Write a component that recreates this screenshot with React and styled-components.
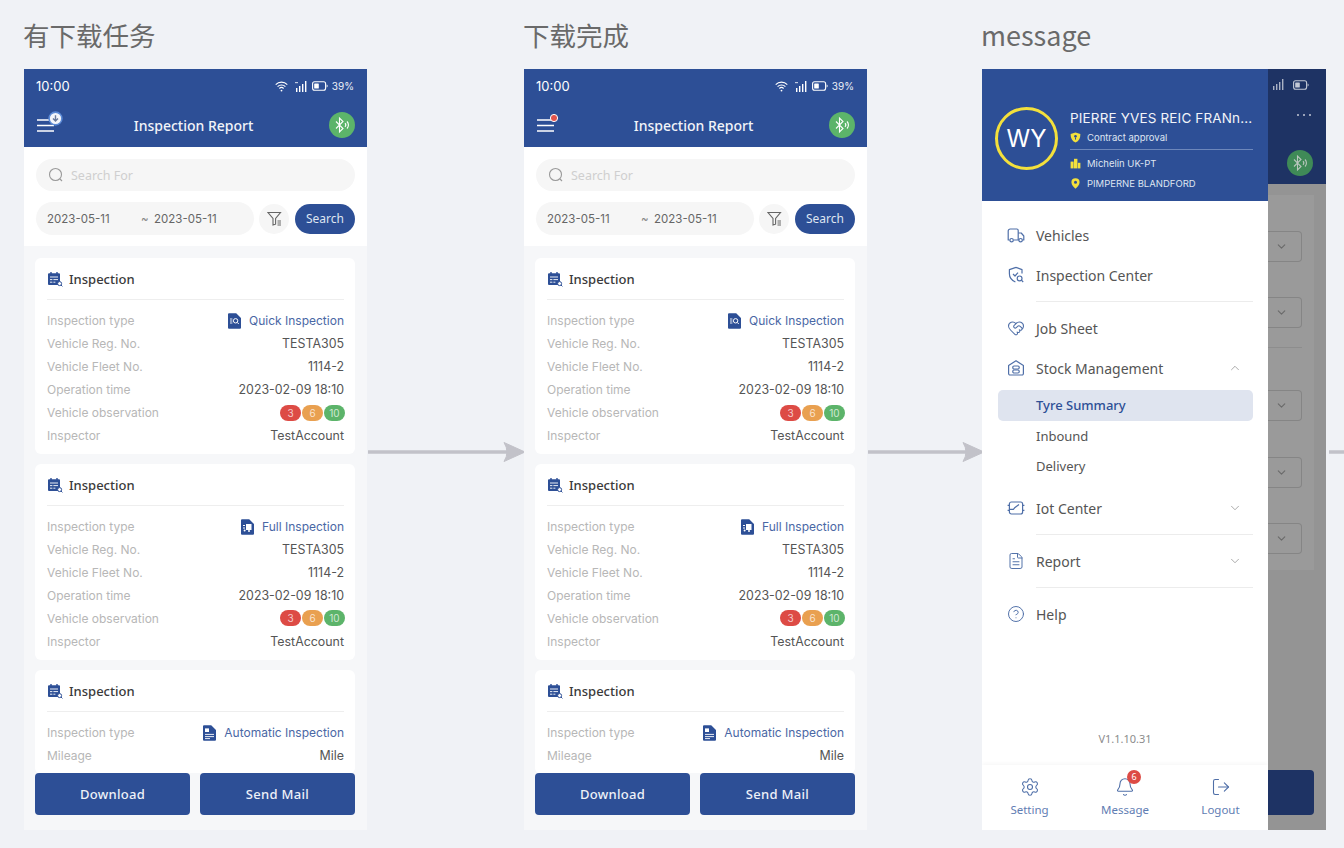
import React from 'react';
import styled, { createGlobalStyle } from 'styled-components';
import { ChevronDown, ChevronUp, HeartHandshake, FileText, CircleHelp, Settings, Bell, LogOut } from 'lucide-react';

const BLUE = '#2d4f96';
const ICON = '#4f6fa8';

const Global = createGlobalStyle`
  html, body { margin: 0; padding: 0; background: #f0f2f6; }
  body { font-family: "Noto Sans", "Noto Sans CJK SC", sans-serif; }
  * { box-sizing: border-box; }
`;

const Page = styled.div`
  width: 1344px;
  height: 848px;
  overflow: hidden;
  display: flex;
  padding-left: 24px;
  background: #f0f2f6;
`;

const Column = styled.section`
  flex: none;
  display: flex;
  flex-direction: column;
`;

const Title = styled.h2`
  height: 69px;
  margin: 0 0 0 -1px;
  padding-top: 16px;
  font-size: ${(p) => p.$size}px;
  line-height: 38px;
  font-weight: 400;
  color: #6a6a6a;
  font-family: "Noto Sans CJK SC", "Noto Sans", sans-serif;
`;

const ArrowCell = styled.div`
  flex: none;
  width: ${(p) => p.$width}px;
  padding: 440px 0 0 ${(p) => p.$inset || 0}px;
  svg { display: block; overflow: visible; }
`;

const Phone = styled.div`
  position: relative;
  width: ${(p) => p.$width || 343}px;
  height: 761px;
  overflow: hidden;
  display: flex;
  flex-direction: ${(p) => (p.$row ? 'row' : 'column')};
  background: #f6f7f9;
`;

const TopBar = styled.header`
  flex: none;
  height: 78px;
  background: ${BLUE};
  color: #fff;
`;

const StatusBar = styled.div`
  height: 34px;
  padding: 0 13px 0 12px;
  display: flex;
  align-items: center;
  justify-content: space-between;
`;

const Time = styled.span`
  font-family: Inter, sans-serif;
  font-size: 13px;
  color: #fff;
`;

const StatusIcons = styled.div`
  display: flex;
  align-items: center;
  gap: 4px;
  svg { display: block; }
  svg:first-child { margin-right: 3px; }
`;

const Percent = styled.span`
  font-family: Inter, sans-serif;
  font-size: 10px;
  color: #eef1f8;
`;

const NavBar = styled.div`
  height: 44px;
  padding: 0 12px 0 13px;
  display: flex;
  align-items: center;
  justify-content: space-between;
`;

const NavTitle = styled.div`
  font-size: 14px;
  font-weight: 500;
  color: #f2f4f9;
`;

const BtButton = styled.div`
  width: 26px;
  height: 26px;
  flex: none;
  border-radius: 50%;
  background: ${(p) => (p.$dim ? '#3f8a57' : '#5cb46a')};
  display: flex;
  align-items: center;
  justify-content: center;
`;

const SearchPanel = styled.div`
  flex: none;
  height: 99px;
  padding: 12px 12px 0 12px;
  background: #fff;
`;

const SearchInput = styled.div`
  height: 32px;
  border-radius: 16px;
  background: #f6f6f6;
  padding-left: 12px;
  display: flex;
  align-items: center;
  gap: 7px;
  font-size: 12.5px;
  color: #cfcfcf;
`;

const FilterRow = styled.div`
  margin-top: 11px;
  display: flex;
  align-items: center;
`;

const DateRange = styled.div`
  width: 218px;
  height: 33px;
  border-radius: 17px;
  background: #f6f6f6;
  padding-left: 11px;
  display: flex;
  align-items: center;
  font-family: Inter, sans-serif;
  font-size: 11.5px;
  color: #666;
`;

const DateValue = styled.span`
  flex: none;
  width: 64px;
`;

const Tilde = styled.span`
  flex: none;
  width: 13px;
  margin-left: 30px;
  color: #888;
`;

const FilterButton = styled.div`
  width: 30px;
  height: 30px;
  margin-left: 5px;
  border-radius: 50%;
  background: #f6f6f6;
  display: flex;
  align-items: center;
  justify-content: center;
`;

const SearchButton = styled.div`
  width: 60px;
  height: 30px;
  margin-left: 6px;
  border-radius: 15px;
  background: ${BLUE};
  color: #dfe5f1;
  font-size: 12px;
  display: flex;
  align-items: center;
  justify-content: center;
`;

const List = styled.div`
  flex: 1;
  min-height: 0;
  overflow: hidden;
  padding: 12px 12px 0 11px;
  display: flex;
  flex-direction: column;
  gap: 10px;
`;

const Card = styled.article`
  flex: none;
  background: #fff;
  border-radius: 6px;
  padding: 0 11px 7px 12px;
`;

const CardHead = styled.div`
  height: 42px;
  padding-top: 1px;
  display: flex;
  align-items: center;
  gap: 6px;
  border-bottom: 1px solid #eeeeee;
  font-size: 13px;
  font-weight: 500;
  color: #3a3a3a;
  svg { display: block; }
`;

const Rows = styled.div`
  padding-top: 9.5px;
`;

const Row = styled.div`
  height: 22.9px;
  display: flex;
  align-items: center;
  justify-content: space-between;
  font-family: Inter, sans-serif;
  font-size: 12px;
`;

const Label = styled.span`
  color: #b7b7b7;
`;

const Value = styled.span`
  color: ${(p) => (p.$link ? '#4a67a5' : '#555')};
  font-size: ${(p) => (p.$link ? 12 : 12.4)}px;
  display: flex;
  align-items: center;
  gap: 7px;
  svg { display: block; }
`;

const Badges = styled.div`
  display: flex;
  gap: 1px;
  margin-right: -1px;
`;

const Badge = styled.span`
  width: 21px;
  height: 16px;
  border-radius: 8px;
  background: ${(p) => p.$color};
  color: rgba(255, 255, 255, 0.72);
  font-size: 10px;
  line-height: 16px;
  text-align: center;
`;

const Footer = styled.div`
  position: absolute;
  left: 11px;
  right: 12px;
  bottom: 15px;
  height: 42px;
  display: flex;
  justify-content: space-between;
  background: #f6f7f9;
`;

const ActionButton = styled.div`
  width: 155px;
  border-radius: 4px;
  background: ${BLUE};
  color: #eef1f8;
  font-size: 13px;
  font-weight: 500;
  letter-spacing: 0.3px;
  display: flex;
  align-items: center;
  justify-content: center;
`;

/* message screen */
const Drawer = styled.aside`
  flex: none;
  width: 286px;
  display: flex;
  flex-direction: column;
  background: #fff;
`;

const Profile = styled.div`
  flex: none;
  height: 132px;
  padding: 38px 15px 0 13px;
  background: ${BLUE};
  display: flex;
  align-items: flex-start;
  gap: 12px;
`;

const Avatar = styled.div`
  flex: none;
  width: 63px;
  height: 63px;
  border: 3px solid #f3e03c;
  border-radius: 50%;
  color: #fff;
  font-family: Inter, sans-serif;
  font-size: 24px;
  display: flex;
  align-items: center;
  justify-content: center;
`;

const ProfileInfo = styled.div`
  flex: 1;
  min-width: 0;
  margin-top: 2px;
  font-family: Inter, sans-serif;
`;

const ProfileName = styled.div`
  font-size: 13.5px;
  letter-spacing: 0.15px;
  line-height: 18px;
  color: #f2f4f9;
  white-space: nowrap;
`;

const ProfileLine = styled.div`
  margin-top: ${(p) => p.$top}px;
  height: 14px;
  display: flex;
  align-items: center;
  gap: 6px;
  font-size: 9.5px;
  color: #dfe5f1;
  white-space: nowrap;
  svg { display: block; flex: none; }
`;

const ProfileRule = styled.div`
  margin-top: 5px;
  height: 1px;
  background: #6d87bb;
`;

const Menu = styled.nav`
  flex: 1;
  padding: 14px 15px 0 25px;
`;

const MenuItem = styled.div`
  height: 40px;
  display: flex;
  align-items: center;
  gap: 11px;
  font-size: 14px;
  color: #555;
  svg { display: block; flex: none; }
`;

const MenuChevron = styled.span`
  margin-left: auto;
  margin-right: 11px;
  display: flex;
`;

const MenuRule = styled.div`
  height: 1px;
  margin: 6px 0 6px 29px;
  background: #ececec;
`;

const SubMenu = styled.div`
  margin: 2px 0 6.5px -9px;
`;

const SubItem = styled.div`
  height: 30.5px;
  padding-left: 38px;
  display: flex;
  align-items: center;
  border-radius: 5px;
  font-size: 13px;
  font-weight: ${(p) => (p.$active ? 500 : 400)};
  color: ${(p) => (p.$active ? BLUE : '#555')};
  background: ${(p) => (p.$active ? '#dfe4ef' : 'transparent')};
`;

const Version = styled.div`
  flex: none;
  height: 16px;
  margin-bottom: 18px;
  text-align: center;
  font-size: 11px;
  line-height: 16px;
  color: #8c8c8c;
`;

const DrawerFooter = styled.div`
  flex: none;
  height: 65px;
  padding-top: 12px;
  display: grid;
  grid-template-columns: 95px 96px 95px;
  box-shadow: 0 -2px 4px rgba(0, 0, 0, 0.03);
`;

const FooterItem = styled.div`
  display: flex;
  flex-direction: column;
  align-items: center;
  gap: 5px;
  font-size: 11.5px;
  line-height: 16px;
  color: #5f7db3;
`;

const FooterIcon = styled.span`
  position: relative;
  display: block;
  width: 20px;
  height: 20px;
  svg { display: block; }
`;

const Count = styled.span`
  position: absolute;
  top: -7px;
  left: 12px;
  width: 14px;
  height: 14px;
  border-radius: 50%;
  background: #dd4b45;
  color: #fff;
  font-size: 9px;
  line-height: 14px;
  text-align: center;
`;

const Backdrop = styled.div`
  flex: 1;
  min-width: 0;
  display: flex;
  flex-direction: column;
  background: #949494;
`;

const DimHeader = styled.div`
  flex: none;
  height: 115px;
  padding: 10px 13px 0 0;
  background: #1e3364;
  display: flex;
  flex-direction: column;
  align-items: flex-end;
`;

const DimStatus = styled.div`
  display: flex;
  align-items: center;
  gap: 8px;
  margin-right: 4px;
  svg { display: block; }
`;

const DimDots = styled.div`
  margin-top: 24px;
  height: 4px;
  display: flex;
  gap: 4px;
  margin-right: 2px;
`;

const Dot = styled.i`
  display: block;
  width: 2px;
  height: 2px;
  border-radius: 50%;
  background: #c3c9d6;
`;

const DimBt = styled.div`
  margin-top: 32px;
`;

const DimPanel = styled.div`
  flex: none;
  width: 46px;
  height: 375px;
  margin-top: 11px;
  padding-top: 36px;
  overflow: hidden;
  background: #9a9a9a;
`;

const DimSelect = styled.div`
  width: 34px;
  height: 31px;
  margin-top: ${(p) => p.$top || 0}px;
  border: 1px solid #858585;
  border-left: 0;
  border-radius: 0 4px 4px 0;
  padding-right: 13px;
  display: flex;
  align-items: center;
  justify-content: flex-end;
`;

const DimRule = styled.div`
  width: 34px;
  height: 1px;
  margin-top: 19px;
  background: #8d8d8d;
`;

const DimButton = styled.div`
  flex: none;
  width: 46px;
  height: 45px;
  margin-top: auto;
  margin-bottom: 15px;
  border-radius: 0 4px 4px 0;
  background: #1e3364;
`;

const MenuGlyph = styled.svg`
  display: block;
  flex: none;
  overflow: visible;
  margin-left: -1px;
`;

/* drawings */
const Arrow = ({ width }) => (
  <svg width={width} height="24" viewBox={`0 0 ${width} 24`}>
    <path d={`M1 12H${width - 8}`} stroke="#c2c2c9" strokeWidth="3.5" fill="none" />
    <path d={`M${width - 21} 2.5L${width} 12L${width - 21} 21.5Q${width - 15} 12 ${width - 21} 2.5Z`} fill="#c2c2c9" stroke="#c2c2c9" strokeWidth="1" strokeLinejoin="round" />
  </svg>
);

const WifiIcon = () => (
  <svg width="13" height="11" viewBox="0 0 13 11" fill="none" stroke="#fff" strokeWidth="1.2">
    <path d="M.7 3.6a8.2 8.2 0 0 1 11.6 0" />
    <path d="M2.6 5.6a5.5 5.5 0 0 1 7.8 0" />
    <path d="M4.4 7.5a3 3 0 0 1 4.2 0" />
    <circle cx="6.5" cy="9.6" r=".9" fill="#fff" stroke="none" />
  </svg>
);

const SignalIcon = ({ color = '#fff', small }) => (
  <svg width="13" height="11" viewBox="0 0 13 11" fill={color}>
    {!small && <rect x="0" y="1" width="3" height="1.2" opacity=".7" />}
    <rect x="1" y="7" width="1.4" height="4" />
    <rect x="4" y="5" width="1.4" height="6" />
    <rect x="7" y="3" width="1.4" height="8" />
    <rect x="10" y="0" width="1.4" height="11" />
  </svg>
);

const BatteryIcon = ({ color = '#fff', fill = '#fff' }) => (
  <svg width="16" height="10" viewBox="0 0 16 10" fill="none">
    <rect x=".6" y=".8" width="13" height="8.4" rx="2" stroke={color} strokeWidth="1.1" />
    <rect x="2.2" y="2.4" width="4.6" height="5.2" rx=".6" fill={fill} />
    <path d="M14.6 3.6c.8.2 1 .8 1 1.4s-.2 1.2-1 1.4z" fill={color} />
  </svg>
);

const Status = () => (
  <StatusBar>
    <Time>10:00</Time>
    <StatusIcons>
      <WifiIcon />
      <SignalIcon />
      <BatteryIcon />
      <Percent>39%</Percent>
    </StatusIcons>
  </StatusBar>
);

const BtIcon = ({ color = '#fff' }) => (
  <svg width="18" height="18" viewBox="0 0 18 18" fill="none" stroke={color} strokeWidth="1.1">
    <path d="M3 5.5l7 7-3.5 3.5V2L10 5.5l-7 7" />
    <path d="M12 7.2a2.6 2.6 0 0 1 0 3.6" />
    <path d="M14 5.5a5 5 0 0 1 0 7" />
  </svg>
);

const MenuButton = ({ task }) => (
  <MenuGlyph width="22" height="24" viewBox="0 0 22 24">
    <path d="M1 7h17M1 12.5h17M1 18h17" stroke="#fff" strokeWidth="1.6" />
    {task ? (
      <g>
        <circle cx="19.5" cy="5.5" r="6.4" fill="#f4f6fb" stroke="#5b8ad6" strokeWidth="1.6" />
        <path d="M19.5 2.2v5.4M17 5.4l2.5 2.6L22 5.4" stroke="#6a7a9c" strokeWidth="1.4" fill="none" />
      </g>
    ) : (
      <circle cx="18" cy="5" r="3.6" fill="#e2534c" stroke="#fff" strokeWidth="1" />
    )}
  </MenuGlyph>
);

const SearchGlyph = () => (
  <svg width="16" height="16" viewBox="0 0 16 16" fill="none" stroke="#9a9a9a" strokeWidth="1.1">
    <circle cx="7.5" cy="7.5" r="6" />
    <path d="M12 12l2 2" />
  </svg>
);

const FilterGlyph = () => (
  <svg width="15" height="15" viewBox="0 0 15 15" fill="none" stroke="#666" strokeWidth="1.1">
    <path d="M1 1.5h12.5L8.6 7.4v5.8L6 14V7.4z" />
    <path d="M10.5 10h3.5M10.5 12h3.5M10.5 14h3.5" />
  </svg>
);

const ClipboardIcon = () => (
  <svg width="16" height="16" viewBox="0 0 16 16">
    <path d="M1 3.2a1 1 0 0 1 1-1h10a1 1 0 0 1 1 1v9.8a1 1 0 0 1-1 1H2a1 1 0 0 1-1-1z" fill={BLUE} />
    <path d="M4 1v2.6M10 1v2.6" stroke={BLUE} strokeWidth="1.4" />
    <path d="M3 6h8M3 8.6h2.4M6.4 8.6h4.6M3 11.2h2.4M6.4 11.2h2" stroke="#fff" strokeWidth=".9" />
    <circle cx="12.6" cy="12.6" r="2" fill="#fff" stroke={BLUE} strokeWidth="1" />
    <path d="M14 14l1.4 1.4" stroke={BLUE} strokeWidth="1" />
  </svg>
);

const DocShape = () => (
  <path d="M1 1.2A1 1 0 0 1 2 .2h7.2L14 5v9.8a1 1 0 0 1-1 1H2a1 1 0 0 1-1-1z" fill={BLUE} />
);

const QuickDoc = () => (
  <svg width="15" height="16" viewBox="0 0 15 16">
    <DocShape />
    <path d="M3 6h2.4M3 8h2.4M3 10h2.4" stroke="#fff" strokeWidth=".9" />
    <circle cx="8.6" cy="7.8" r="2.2" fill="none" stroke="#fff" strokeWidth="1" />
    <path d="M10.2 9.4l1.6 1.6" stroke="#fff" strokeWidth="1" />
  </svg>
);

const FullDoc = () => (
  <svg width="15" height="16" viewBox="0 0 15 16">
    <DocShape />
    <rect x="6" y="5" width="5.5" height="6" fill="#fff" />
    <path d="M3 6.5h2M3 9h2" stroke="#fff" strokeWidth="1" />
    <circle cx="4.6" cy="11.6" r="1" fill="#fff" />
    <circle cx="9" cy="12" r="1" fill="#fff" />
  </svg>
);

const AutoDoc = () => (
  <svg width="15" height="16" viewBox="0 0 15 16">
    <DocShape />
    <rect x="3" y="3.4" width="4" height="3.6" fill="#fff" />
    <path d="M3 9.4h9M3 11.6h9M3 13.6h5" stroke="#fff" strokeWidth=".9" />
  </svg>
);

const YellowShield = () => (
  <svg width="11" height="11" viewBox="0 0 11 11">
    <path d="M5.5.4L10.4 2c0 4.2-1.4 7-4.9 8.6C2 9 .6 6.2.6 2z" fill="#f3e03c" />
    <circle cx="5.5" cy="4.2" r="1.3" fill={BLUE} />
    <path d="M5.5 5.4v2.2" stroke={BLUE} strokeWidth="1" />
  </svg>
);

const YellowBuilding = () => (
  <svg width="11" height="11" viewBox="0 0 11 11" fill="#f3e03c">
    <rect x=".6" y="3.6" width="3" height="6.8" />
    <rect x="4" y=".8" width="3.4" height="9.6" />
    <rect x="7.8" y="4.8" width="2.6" height="5.6" />
  </svg>
);

const YellowPin = () => (
  <svg width="11" height="11" viewBox="0 0 11 11">
    <path d="M5.5.2a4.1 4.1 0 0 1 4.1 4.1c0 2.7-2.6 5-4.1 6.5-1.5-1.5-4.1-3.8-4.1-6.5A4.1 4.1 0 0 1 5.5.2z" fill="#f3e03c" />
    <circle cx="5.5" cy="4.2" r="1.5" fill={BLUE} />
  </svg>
);

const TruckIcon = () => (
  <svg width="18" height="18" viewBox="0 0 18 18" fill="none" stroke={ICON} strokeWidth="1.2" strokeLinejoin="round">
    <path d="M2.6 14H1.2V5a2 2 0 0 1 2-2h6.6a1.4 1.4 0 0 1 1.4 1.4V14H6.6" />
    <path d="M11.2 7h3l2.6 3v4h-1.4M11.2 14h.6" />
    <circle cx="4.6" cy="14.2" r="1.7" />
    <circle cx="13.6" cy="14.2" r="1.7" />
  </svg>
);

const ShieldSearchIcon = () => (
  <svg width="18" height="18" viewBox="0 0 18 18" fill="none" stroke={ICON} strokeWidth="1.2" strokeLinejoin="round">
    <path d="M9 1.4l6 2.2v4M8.4 16c-3.6-1.6-6-4.4-6-8.2V3.6L9 1.4" />
    <path d="M6 8l2 2 3-3.4" />
    <circle cx="12.6" cy="12.4" r="2.4" />
    <path d="M14.4 14.2l1.8 1.8" />
  </svg>
);

const StockIcon = () => (
  <svg width="18" height="18" viewBox="0 0 18 18" fill="none" stroke={ICON} strokeWidth="1.2" strokeLinejoin="round">
    <path d="M1.6 6.4L9 1.8l7.4 4.6v8.2a1.4 1.4 0 0 1-1.4 1.4H3a1.4 1.4 0 0 1-1.4-1.4z" />
    <rect x="5.8" y="7" width="6.4" height="3" rx="1.2" />
    <rect x="5.8" y="11" width="6.4" height="3" rx="1.2" />
  </svg>
);

const IotIcon = () => (
  <svg width="18" height="18" viewBox="0 0 18 18" fill="none" stroke={ICON} strokeWidth="1.2" strokeLinejoin="round">
    <rect x="2.4" y="3" width="13.2" height="12" rx="2" />
    <path d="M.6 6.4h1.8M.6 11.4h1.8M15.6 6.4h1.8M15.6 11.4h1.8M2.4 10.4h4l1.6-2 4-3" />
  </svg>
);

const Info = [
  ['Vehicle Reg. No.', 'TESTA305'],
  ['Vehicle Fleet No.', '1114-2'],
  ['Operation time', '2023-02-09 18:10'],
];

const ReportCard = ({ icon, type, mileage }) => (
  <Card>
    <CardHead><ClipboardIcon />Inspection</CardHead>
    <Rows>
      <Row>
        <Label>Inspection type</Label>
        <Value $link>{icon}{type}</Value>
      </Row>
      {mileage ? (
        <Row>
          <Label>Mileage</Label>
          <Value>Mile</Value>
        </Row>
      ) : (
        <>
          {Info.map(([k, v]) => (
            <Row key={k}>
              <Label>{k}</Label>
              <Value>{v}</Value>
            </Row>
          ))}
          <Row>
            <Label>Vehicle observation</Label>
            <Badges>
              <Badge $color="#dd4b45">3</Badge>
              <Badge $color="#e9a050">6</Badge>
              <Badge $color="#5cb46a">10</Badge>
            </Badges>
          </Row>
          <Row>
            <Label>Inspector</Label>
            <Value>TestAccount</Value>
          </Row>
        </>
      )}
    </Rows>
  </Card>
);

const ReportScreen = ({ task }) => (
  <Phone>
    <TopBar>
      <Status />
      <NavBar>
        <MenuButton task={task} />
        <NavTitle>Inspection Report</NavTitle>
        <BtButton><BtIcon /></BtButton>
      </NavBar>
    </TopBar>
    <SearchPanel>
      <SearchInput><SearchGlyph />Search For</SearchInput>
      <FilterRow>
        <DateRange>
          <DateValue>2023-05-11</DateValue>
          <Tilde>~</Tilde>
          <DateValue>2023-05-11</DateValue>
        </DateRange>
        <FilterButton><FilterGlyph /></FilterButton>
        <SearchButton>Search</SearchButton>
      </FilterRow>
    </SearchPanel>
    <List>
      <ReportCard icon={<QuickDoc />} type="Quick Inspection" />
      <ReportCard icon={<FullDoc />} type="Full Inspection" />
      <ReportCard icon={<AutoDoc />} type="Automatic Inspection" mileage />
    </List>
    <Footer>
      <ActionButton>Download</ActionButton>
      <ActionButton>Send Mail</ActionButton>
    </Footer>
  </Phone>
);

const MessageScreen = () => (
  <Phone $width={344} $row>
    <Drawer>
      <Profile>
        <Avatar>WY</Avatar>
        <ProfileInfo>
          <ProfileName>PIERRE YVES REIC FRANn...</ProfileName>
          <ProfileLine $top={3}><YellowShield />Contract approval</ProfileLine>
          <ProfileRule />
          <ProfileLine $top={6}><YellowBuilding />Michelin UK-PT</ProfileLine>
          <ProfileLine $top={6}><YellowPin />PIMPERNE BLANDFORD</ProfileLine>
        </ProfileInfo>
      </Profile>
      <Menu>
        <MenuItem><TruckIcon />Vehicles</MenuItem>
        <MenuItem><ShieldSearchIcon />Inspection Center</MenuItem>
        <MenuRule />
        <MenuItem><HeartHandshake size={18} color={ICON} strokeWidth={1.4} />Job Sheet</MenuItem>
        <MenuItem>
          <StockIcon />Stock Management
          <MenuChevron><ChevronUp size={14} color="#888" strokeWidth={1.2} /></MenuChevron>
        </MenuItem>
        <SubMenu>
          <SubItem $active>Tyre Summary</SubItem>
          <SubItem>Inbound</SubItem>
          <SubItem>Delivery</SubItem>
        </SubMenu>
        <MenuItem>
          <IotIcon />Iot Center
          <MenuChevron><ChevronDown size={14} color="#888" strokeWidth={1.2} /></MenuChevron>
        </MenuItem>
        <MenuRule />
        <MenuItem>
          <FileText size={18} color={ICON} strokeWidth={1.3} />Report
          <MenuChevron><ChevronDown size={14} color="#888" strokeWidth={1.2} /></MenuChevron>
        </MenuItem>
        <MenuRule />
        <MenuItem><CircleHelp size={18} color={ICON} strokeWidth={1.3} />Help</MenuItem>
      </Menu>
      <Version>V1.1.10.31</Version>
      <DrawerFooter>
        <FooterItem>
          <FooterIcon><Settings size={20} color={ICON} strokeWidth={1.3} /></FooterIcon>
          Setting
        </FooterItem>
        <FooterItem>
          <FooterIcon>
            <Bell size={20} color={ICON} strokeWidth={1.3} />
            <Count>6</Count>
          </FooterIcon>
          Message
        </FooterItem>
        <FooterItem>
          <FooterIcon><LogOut size={20} color={ICON} strokeWidth={1.3} /></FooterIcon>
          Logout
        </FooterItem>
      </DrawerFooter>
    </Drawer>
    <Backdrop>
      <DimHeader>
        <DimStatus>
          <SignalIcon color="#aab2c4" small />
          <BatteryIcon color="#c3c9d6" fill="#c3c9d6" />
        </DimStatus>
        <DimDots><Dot /><Dot /><Dot /></DimDots>
        <DimBt><BtButton $dim><BtIcon color="#b9c6bd" /></BtButton></DimBt>
      </DimHeader>
      <DimPanel>
        <DimSelect><ChevronDown size={13} color="#6a6a6a" /></DimSelect>
        <DimSelect $top={35}><ChevronDown size={13} color="#6a6a6a" /></DimSelect>
        <DimRule />
        <DimSelect $top={42}><ChevronDown size={13} color="#6a6a6a" /></DimSelect>
        <DimSelect $top={36}><ChevronDown size={13} color="#6a6a6a" /></DimSelect>
        <DimSelect $top={35}><ChevronDown size={13} color="#6a6a6a" /></DimSelect>
      </DimPanel>
      <DimButton />
    </Backdrop>
  </Phone>
);

export default function App() {
  return (
    <>
      <Global />
      <Page>
        <Column>
          <Title $size={26.5}>有下载任务</Title>
          <ReportScreen task />
        </Column>
        <ArrowCell $width={157}><Arrow width={158} /></ArrowCell>
        <Column>
          <Title $size={26.5}>下载完成</Title>
          <ReportScreen />
        </Column>
        <ArrowCell $width={115}><Arrow width={117} /></ArrowCell>
        <Column>
          <Title $size={27}>message</Title>
          <MessageScreen />
        </Column>
        <ArrowCell $width={18} $inset={2}><Arrow width={60} /></ArrowCell>
      </Page>
    </>
  );
}
